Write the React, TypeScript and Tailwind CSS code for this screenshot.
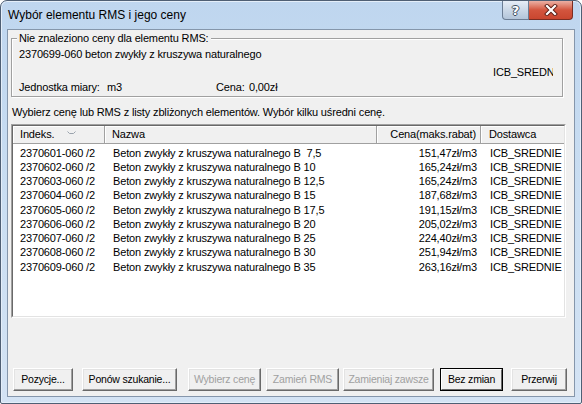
import React from 'react';

const rows = [
  { idx: '2370601-060 /2', klasa: 'B  7,5', cena: '151,47zł/m3' },
  { idx: '2370602-060 /2', klasa: 'B 10', cena: '165,24zł/m3' },
  { idx: '2370603-060 /2', klasa: 'B 12,5', cena: '165,24zł/m3' },
  { idx: '2370604-060 /2', klasa: 'B 15', cena: '187,68zł/m3' },
  { idx: '2370605-060 /2', klasa: 'B 17,5', cena: '191,15zł/m3' },
  { idx: '2370606-060 /2', klasa: 'B 20', cena: '205,02zł/m3' },
  { idx: '2370607-060 /2', klasa: 'B 25', cena: '224,40zł/m3' },
  { idx: '2370608-060 /2', klasa: 'B 30', cena: '251,94zł/m3' },
  { idx: '2370609-060 /2', klasa: 'B 35', cena: '263,16zł/m3' },
];

const Btn: React.FC<{ label: string; w: string; ml: string; disabled?: boolean; isDefault?: boolean }> = ({
  label,
  w,
  ml,
  disabled,
  isDefault,
}) => (
  <div
    className={`${w} ${ml} h-[23px] flex items-center justify-center bg-[#f0f0f0] border ${
      isDefault ? 'border-black' : 'border-t-white border-l-white border-r-[#696969] border-b-[#696969]'
    } ${disabled ? 'text-[#a0a0a0]' : 'text-black'}`}
  >
    <div
      className={`w-full h-full flex items-center justify-center whitespace-nowrap ${
        isDefault
          ? 'border border-t-white border-l-white border-r-[#696969] border-b-[#696969]'
          : 'shadow-[inset_-1px_-1px_0_#a0a0a0,inset_1px_1px_0_#e3e3e3]'
      }`}
    >
      {label}
    </div>
  </div>
);

export default function App() {
  return (
    <div className="w-[582px] h-[404px] overflow-hidden font-['Liberation_Sans',Arial,sans-serif] text-[11px] leading-[13px] tracking-[-0.15px] text-black">
      <div className="w-full h-full flex flex-col border border-[#4f5f74] rounded-t-[7px] rounded-b-[2px] bg-gradient-to-b from-[#bfd6ef] via-[#cadef2] to-[#d4e3f4] shadow-[inset_0_0_0_1px_#e4eef9]">
        {/* title bar */}
        <div className="h-[28px] flex items-start shrink-0">
          <div className="pl-[7px] pt-[7px] text-[12px] leading-[14px] tracking-normal text-black">Wybór elementu RMS i jego ceny</div>
          <div className="ml-auto mr-[8px] flex">
            <div className="w-[27px] h-[19px] border border-t-0 border-[#6b7d94] rounded-bl-[4px] bg-gradient-to-b from-[#e6edf6] via-[#cbd8e7] to-[#b3c5da] flex items-center justify-center">
              <span className="font-['DejaVu_Sans',sans-serif] font-bold text-[13px] leading-[13px] text-white [text-shadow:1px_0_#3d4d60,-1px_0_#3d4d60,0_1px_#3d4d60,0_-1px_#3d4d60]">
                ?
              </span>
            </div>
            <div className="w-[44px] h-[19px] border border-t-0 border-l-0 border-[#7b2d22] rounded-br-[4px] bg-gradient-to-b from-[#eab0a4] via-[#d3553e] to-[#c9462f] flex items-center justify-center">
              <svg width="14" height="12" viewBox="0 0 14 12">
                <path d="M3 2 L11 10 M11 2 L3 10" stroke="#5a1d14" strokeWidth="4" strokeLinecap="square" />
                <path d="M3 2 L11 10 M11 2 L3 10" stroke="#ffffff" strokeWidth="2.2" strokeLinecap="square" />
              </svg>
            </div>
          </div>
        </div>

        {/* client area */}
        <div className="mx-[6px] mb-[6px] flex-1 border border-[#8596ab] bg-[#f0f0f0] flex flex-col pl-[3px]">
          {/* group box */}
          <div className="relative mt-[8px] h-[59px] w-[552px] border border-[#a0a0a0] shadow-[1px_1px_0_#ffffff,inset_1px_1px_0_#ffffff] flex flex-col pl-[7px] pt-[9px]">
            <span className="absolute -top-[7px] left-[5px] bg-[#f0f0f0] px-[2px]">Nie znaleziono ceny dla elementu RMS:</span>
            <div>2370699-060 beton zwykły z kruszywa naturalnego</div>
            <div className="mt-[5px] flex justify-end pr-[9px]">
              <span className="w-[60px] overflow-hidden whitespace-nowrap">ICB_SREDNIE</span>
            </div>
            <div className="mt-[2px] flex">
              <span className="w-[88px]">Jednostka miary:</span>
              <span className="w-[109px]">m3</span>
              <span className="w-[33px]">Cena:</span>
              <span>0,00zł</span>
            </div>
          </div>

          <div className="mt-[9px] ml-[1px]">Wybierz cenę lub RMS z listy zbliżonych elementów. Wybór kilku uśredni cenę.</div>

          {/* list */}
          <div className="mt-[5px] w-[555px] h-[194px] border border-t-[#a0a0a0] border-l-[#a0a0a0] border-r-white border-b-white">
            <div className="w-full h-full border border-t-[#696969] border-l-[#696969] border-r-[#e3e3e3] border-b-[#e3e3e3] bg-white overflow-hidden">
              <div className="flex h-[18px] bg-[#f0f0f0] whitespace-nowrap">
                <div className="w-[92px] shrink-0 flex items-center pl-[7px] border-r border-b border-r-[#a0a0a0] border-b-[#a0a0a0] shadow-[inset_1px_1px_0_#ffffff]">
                  <span>Indeks.</span>
                  <svg className="ml-[13px] mb-[3px]" width="9" height="4" viewBox="0 0 9 4">
                    <path d="M0.5 0.5 L2.5 2.5 L6.5 2.5 L8.5 0.5" stroke="#9aa3ad" fill="none" />
                  </svg>
                </div>
                <div className="w-[272px] shrink-0 flex items-center pl-[7px] border-r border-b border-r-[#a0a0a0] border-b-[#a0a0a0] shadow-[inset_1px_1px_0_#ffffff]">
                  Nazwa
                </div>
                <div className="w-[104px] shrink-0 flex items-center justify-end pr-[4px] border-r border-b border-r-[#a0a0a0] border-b-[#a0a0a0] shadow-[inset_1px_1px_0_#ffffff]">
                  Cena(maks.rabat)
                </div>
                <div className="flex-1 flex items-center pl-[8px] border-b border-b-[#a0a0a0] shadow-[inset_1px_1px_0_#ffffff]">
                  Dostawca
                </div>
              </div>
              <div className="pt-[2px]">
                {rows.map((r) => (
                  <div key={r.idx} className="flex h-[14.25px] items-center whitespace-pre">
                    <div className="w-[92px] shrink-0 pl-[7px]">{r.idx}</div>
                    <div className="w-[272px] shrink-0 pl-[8px]">Beton zwykły z kruszywa naturalnego {r.klasa}</div>
                    <div className="w-[104px] shrink-0 text-right pr-[4px]">{r.cena}</div>
                    <div className="flex-1 pl-[9px]">ICB_SREDNIE</div>
                  </div>
                ))}
              </div>
            </div>
          </div>

          {/* buttons */}
          <div className="mt-[50px] flex text-[10.5px] tracking-[-0.2px]">
            <Btn label="Pozycje..." w="w-[60px]" ml="ml-[2px]" />
            <Btn label="Ponów szukanie..." w="w-[95px]" ml="ml-[9px]" />
            <Btn label="Wybierz cenę" w="w-[73px]" ml="ml-[11px]" disabled />
            <Btn label="Zamień RMS" w="w-[73px]" ml="ml-[5px]" disabled />
            <Btn label="Zamieniaj zawsze" w="w-[91px]" ml="ml-[4px]" disabled />
            <Btn label="Bez zmian" w="w-[63px]" ml="ml-[6px]" isDefault />
            <Btn label="Przerwij" w="w-[56px]" ml="ml-[8px]" />
          </div>
        </div>
      </div>
    </div>
  );
}
